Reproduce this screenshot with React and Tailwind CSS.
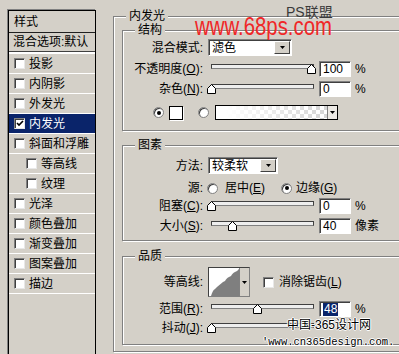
import React from "react";

function Arrow() {
  return (
    <svg width="5" height="3" viewBox="0 0 5 3">
      <path d="M0 0h5L2.5 3z" fill="#000" />
    </svg>
  );
}

function Check({ checked }) {
  return (
    <span className="w-[11px] h-[11px] shrink-0 bg-white border border-t-[#808080] border-l-[#808080] border-r-[#e8e8e8] border-b-[#e8e8e8] shadow-[inset_1px_1px_0_#404040] flex items-center justify-center">
      {checked && (
        <svg width="8" height="7" viewBox="0 0 8 7">
          <path d="M1 3l2 2 4-4" stroke="#000" strokeWidth="1.6" fill="none" />
        </svg>
      )}
    </span>
  );
}

function Radio({ on }) {
  return (
    <span className="w-[11px] h-[11px] shrink-0 rounded-full bg-white border border-[#808080] shadow-[inset_1px_1px_0_#404040] flex items-center justify-center">
      {on && <span className="w-[4px] h-[4px] rounded-full bg-black" />}
    </span>
  );
}

function Field({ value, selected }) {
  return (
    <div className="w-[32px] h-[16px] shrink-0 bg-white border border-t-[#808080] border-l-[#808080] border-r-white border-b-white shadow-[inset_1px_1px_0_#404040] pl-[3px] flex items-center leading-[13px]">
      {selected ? <span className="bg-[#0a246a] text-white px-px">{value}</span> : value}
    </div>
  );
}

function Slider({ pos }) {
  return (
    <div className="relative w-[103px] h-[10px] shrink-0 ml-[8px]">
      <div className="h-[5px] bg-[#eeeeee] border border-[#404040] border-b-[#808080]" />
      <svg className="absolute top-0" style={{ left: pos - 4 }} width="9" height="10" viewBox="0 0 9 10">
        <path d="M0.5 9.5V4.5L4.5 0.5L8.5 4.5V9.5Z" fill="#fff" stroke="#000" />
      </svg>
    </div>
  );
}

function Select({ text, className }) {
  return (
    <div className={`h-[17px] ml-[5px] shrink-0 bg-white border border-t-[#808080] border-l-[#808080] border-r-white border-b-white shadow-[inset_1px_1px_0_#404040] flex items-center pl-[3px] pr-px ${className}`}>
      <span className="flex-1 leading-[14px]">{text}</span>
      <span className="w-[16px] h-[13px] bg-[#d4d0c8] border border-t-white border-l-white border-r-[#404040] border-b-[#404040] flex items-center justify-center">
        <Arrow />
      </span>
    </div>
  );
}

function Label({ children }) {
  return <span className="w-[80px] shrink-0 text-right leading-[14px] whitespace-nowrap">{children}</span>;
}

function Mn({ k }) {
  return (
    <>
      (<span className="underline">{k}</span>)
    </>
  );
}

function Group({ title, className, children }) {
  return (
    <div className={`relative shrink-0 border border-[#808080] shadow-[inset_1px_1px_0_#fff,1px_1px_0_#fff] ${className}`}>
      <span className="absolute -top-[8px] left-[12px] px-[3px] bg-[#d4d0c8] leading-[14px]">{title}</span>
      {children}
    </div>
  );
}

const items = [
  { t: "投影" },
  { t: "内阴影" },
  { t: "外发光" },
  { t: "内发光", sel: true },
  { t: "斜面和浮雕" },
  { t: "等高线", sub: true },
  { t: "纹理", sub: true },
  { t: "光泽" },
  { t: "颜色叠加" },
  { t: "渐变叠加" },
  { t: "图案叠加" },
  { t: "描边" },
];

export default function App() {
  return (
    <div className="relative w-[399px] h-[354px] overflow-hidden bg-[#d4d0c8] flex items-start text-[12px] text-black font-['Liberation_Sans','Noto_Sans_CJK_SC',sans-serif]">
      {/* styles list */}
      <div className="ml-[8px] mt-[10px] w-[88px] h-[360px] shrink-0 border border-black shadow-[-1px_-1px_0_#808080]">
        <div className="h-[22px] border-b border-[#202020] pl-[5px] flex items-center leading-[14px]">样式</div>
        <div className="h-[19px] border-b border-[#404040] pl-[4px] flex items-center leading-[14px] whitespace-nowrap">混合选项:默认</div>
        <div className="h-[2px] bg-white" />
        {items.map((it) => (
          <div
            key={it.t}
            className={`h-[20px] border-b border-white flex items-center ${it.sub ? "pl-[17px]" : "pl-[5px]"} ${it.sel ? "bg-[#0a246a] text-white" : ""}`}
          >
            <Check checked={it.sel} />
            <span className="ml-[4px] leading-[14px] whitespace-nowrap">{it.t}</span>
          </div>
        ))}
      </div>

      {/* inner glow */}
      <Group title="内发光" className="ml-[17px] mt-[16px] w-[320px] h-[336px] pl-[8px] pt-[13px] flex flex-col">
        <Group title="结构" className="w-[300px] h-[101px]">
          <div className="mt-[8px] h-[17px] flex items-center">
            <Label>混合模式:</Label>
            <Select text="滤色" className="w-[84px]" />
          </div>
          <div className="mt-[5px] h-[16px] flex items-center">
            <Label>
              不透明度<Mn k="O" />:
            </Label>
            <Slider pos={100} />
            <span className="ml-[5px]"><Field value="100" /></span>
            <span className="ml-[4px] leading-[14px]">%</span>
          </div>
          <div className="mt-[4px] h-[16px] flex items-center">
            <Label>
              杂色<Mn k="N" />:
            </Label>
            <Slider pos={0} />
            <span className="ml-[5px]"><Field value="0" /></span>
            <span className="ml-[4px] leading-[14px]">%</span>
          </div>
          <div className="mt-[8px] h-[15px] flex items-center">
            <span className="ml-[30px]"><Radio on /></span>
            <span className="ml-[5px] w-[14px] h-[14px] bg-white border border-black shadow-[1px_1px_0_#fff]" />
            <span className="ml-[15px]"><Radio /></span>
            <span className="ml-[6px] w-[123px] h-[15px] border border-black flex justify-end [background-image:linear-gradient(to_right,#fff_8%,rgba(255,255,255,0)_90%),repeating-conic-gradient(#d6d6d6_0_25%,#fff_0_50%)] [background-size:100%_100%,8px_8px]">
              <span className="w-[10px] h-full bg-[#ece9e4] border-l border-[#808080] flex items-center justify-center">
                <Arrow />
              </span>
            </span>
          </div>
        </Group>

        <Group title="图素" className="mt-[14px] w-[300px] h-[96px]">
          <div className="mt-[11px] h-[17px] flex items-center">
            <Label>方法:</Label>
            <Select text="较柔软" className="w-[70px]" />
          </div>
          <div className="mt-[6px] h-[16px] flex items-center">
            <Label>源:</Label>
            <span className="ml-[4px]"><Radio /></span>
            <span className="ml-[7px] w-[56px] leading-[14px] whitespace-nowrap">
              居中<Mn k="E" />
            </span>
            <Radio on />
            <span className="ml-[4px] leading-[14px] whitespace-nowrap">
              边缘<Mn k="G" />
            </span>
          </div>
          <div className="mt-[2px] h-[16px] flex items-center">
            <Label>
              阻塞<Mn k="C" />:
            </Label>
            <Slider pos={0} />
            <span className="ml-[5px]"><Field value="0" /></span>
            <span className="ml-[4px] leading-[14px]">%</span>
          </div>
          <div className="mt-[4px] h-[16px] flex items-center">
            <Label>
              大小<Mn k="S" />:
            </Label>
            <Slider pos={21} />
            <span className="ml-[5px]"><Field value="40" /></span>
            <span className="ml-[4px] leading-[14px]">像素</span>
          </div>
        </Group>

        <Group title="品质" className="mt-[15px] w-[300px] h-[89px]">
          <div className="mt-[10px] h-[30px] flex items-center">
            <Label>等高线:</Label>
            <span className="ml-[5px] w-[42px] h-[30px] shrink-0 border border-t-[#404040] border-l-[#404040] border-r-[#808080] border-b-[#808080] bg-white flex">
              <svg width="30" height="28" viewBox="0 0 30 28" className="shrink-0">
                <path
                  d="M2 28C3 25 4 22 6 21L8 19C10 17 12 16 14 14L16 13C17 11 18 10 20 9L22 8C23 6 24 5 26 4L28 3C29 2 29 2 30 1V28Z"
                  fill="#7f7f7f"
                />
              </svg>
              <span className="flex-1 bg-[#d4d0c8] border-l border-[#808080] flex items-center justify-center">
                <Arrow />
              </span>
            </span>
            <span className="ml-[13px]"><Check /></span>
            <span className="ml-[5px] leading-[14px] whitespace-nowrap">
              消除锯齿<Mn k="L" />
            </span>
          </div>
          <div className="mt-[4px] h-[16px] flex items-center">
            <Label>
              范围<Mn k="R" />:
            </Label>
            <Slider pos={46} />
            <span className="ml-[5px]"><Field value="48" selected /></span>
            <span className="ml-[4px] leading-[14px]">%</span>
          </div>
          <div className="mt-[3px] h-[16px] flex items-center">
            <Label>
              抖动<Mn k="J" />:
            </Label>
            <Slider pos={0} />
          </div>
        </Group>
      </Group>

      {/* watermarks */}
      <span className="absolute left-[286px] top-[5px] text-[14px] leading-[14px] text-[#3a3a3a]">PS联盟</span>
      <span className="absolute left-[195px] top-[14px] text-[25px] leading-[25px] text-[#f02828] origin-left scale-x-[0.815] whitespace-nowrap">
        www.68ps.com
      </span>
      <span className="absolute left-[287px] top-[318px] text-[12px] leading-[14px] text-black whitespace-nowrap [text-shadow:1px_0_#fff,-1px_0_#fff,0_1px_#fff,0_-1px_#fff]">
        中国-365设计网
      </span>
      <span className="absolute left-[262px] top-[336px] text-[10.5px] leading-[12px] text-black whitespace-nowrap font-['Liberation_Mono',monospace] [text-shadow:1px_0_#fff,-1px_0_#fff,0_1px_#fff,0_-1px_#fff]">
        'www.cn365design.com.
      </span>
    </div>
  );
}
